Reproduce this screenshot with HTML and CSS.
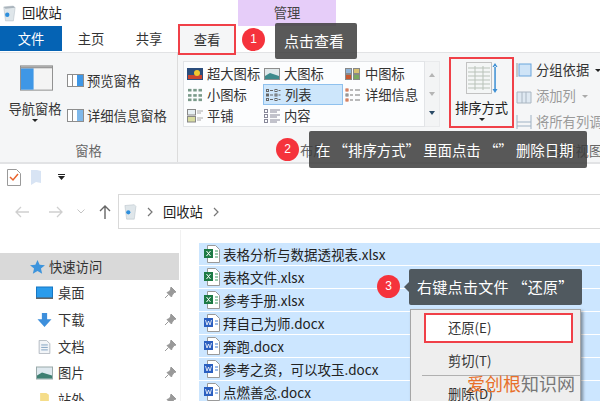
FILE: index.html
```html
<!DOCTYPE html>
<html lang="zh">
<head>
<meta charset="utf-8">
<title>回收站</title>
<link rel="stylesheet" href="styles.css">
</head>
<body>
<div class="win">
  <header class="titlebar">
    <svg class="bin" viewBox="0 0 16 20"><path d="M2 3l11-1 2 2-2 15-9 0z" fill="#dfe6ea" stroke="#b4bec6" stroke-width=".6"/><path d="M2 3l11-1 2 2-11 1z" fill="#aab4bc"/><circle cx="6" cy="12" r="2.5" fill="#2f8fdc"/></svg>
    <span class="wintitle">回收站</span>
    <span class="manage">管理</span>
  </header>
  <nav class="tabs">
    <span class="tab file">文件</span>
    <span class="tab home">主页</span>
    <span class="tab share">共享</span>
    <span class="tab view">查看</span>
  </nav>
  <section class="ribbon">
    <div class="group panes">
      <div class="panes-main">
        <div class="navpane">
          <svg class="bigicon" viewBox="0 0 34 26"><rect x=".5" y=".5" width="33" height="25" fill="#f4f4f4" stroke="#8f8f8f"/><rect x="1" y="3" width="13" height="22" fill="#3f97e6"/><rect x="1" y="1" width="32" height="2" fill="#9a9a9a"/></svg>
          <span class="navlabel">导航窗格</span>
          <i class="caret"></i>
        </div>
        <div class="panelist">
          <div class="paneitem"><svg class="pane-ic" viewBox="0 0 17 13"><rect x=".5" y=".5" width="16" height="12" fill="#fff" stroke="#8d8d8d"/><rect x="10" y="1" width="6" height="11" fill="#3f97e6"/><rect x="5" y="1" width="1" height="11" fill="#8d8d8d"/></svg>预览窗格</div>
          <div class="paneitem"><svg class="pane-ic" viewBox="0 0 17 13"><rect x=".5" y=".5" width="16" height="12" fill="#fff" stroke="#8d8d8d"/><rect x="10" y="1" width="6" height="11" fill="#7fb8ea"/><rect x="5" y="1" width="1" height="11" fill="#8d8d8d"/></svg>详细信息窗格</div>
        </div>
      </div>
      <div class="grouplabel">窗格</div>
    </div>
    <div class="group layout">
      <div class="gallery">
        <div class="gal-grid">
          <div class="gi"><svg class="gi-ic" viewBox="0 0 16 12"><rect width="16" height="12" fill="#2b4d7c"/><rect x="1" y="7" width="14" height="4" fill="#c9452f"/><circle cx="10" cy="5" r="3" fill="#f0c830"/></svg>超大图标</div>
          <div class="gi"><svg class="gi-ic" viewBox="0 0 16 12"><rect x=".5" y=".5" width="15" height="11" fill="#dfe8ea" stroke="#8d8d8d"/><path d="M1 8l5-3 9 3v3H1z" fill="#3d8a8c"/></svg>大图标</div>
          <div class="gi"><svg class="gi-ic" viewBox="0 0 16 12"><rect x=".5" y=".5" width="6" height="5" fill="#8fb4d8" stroke="#888"/><rect x="8.500" y=".5" width="6" height="5" fill="#d8c070" stroke="#888"/><rect x=".5" y="6.500" width="6" height="5" fill="#c9582f" stroke="#888"/><rect x="8.500" y="6.500" width="6" height="5" fill="#7aa860" stroke="#888"/></svg>中图标</div>
          <div class="gi"><svg class="gi-ic" viewBox="0 0 16 16"><g fill="#7a9a8a"><rect x="0" y="1" width="4" height="3"/><rect x="6" y="1" width="4" height="3"/><rect x="12" y="1" width="4" height="3"/><rect x="0" y="7" width="4" height="3"/><rect x="6" y="7" width="4" height="3"/><rect x="12" y="7" width="4" height="3"/><rect x="0" y="12" width="4" height="3"/><rect x="6" y="12" width="4" height="3"/><rect x="12" y="12" width="4" height="3"/></g></svg>小图标</div>
          <div class="gi sel"><svg class="gi-ic" viewBox="0 0 16 14"><g fill="none" stroke="#666"><rect x="1.500" y="1.500" width="2" height="2"/><rect x="1.500" y="6" width="2" height="2"/><rect x="1.500" y="10.500" width="2" height="2"/><rect x="10" y="1.500" width="2" height="2"/><rect x="10" y="6" width="2" height="2"/><rect x="10" y="10.500" width="2" height="2"/><path d="M5 2.500h3M5 7h3M5 11.500h3M13.500 2.500h2M13.500 7h2M13.500 11.500h2"/></g></svg>列表</div>
          <div class="gi"><svg class="gi-ic" viewBox="0 0 16 14"><g fill="none" stroke="#777"><rect x="1" y="1" width="2" height="2" stroke="#c9582f"/><rect x="1" y="6" width="2" height="2"/><rect x="1" y="11" width="2" height="2" stroke="#c9582f"/><path d="M5 2h3M5 7h3M5 12h3M10 2h5M10 7h5M10 12h5"/></g></svg>详细信息</div>
          <div class="gi"><svg class="gi-ic" viewBox="0 0 16 14"><rect x=".5" y=".5" width="8" height="5.500" fill="#e8f0f4" stroke="#888"/><rect x=".5" y="7.500" width="8" height="5.500" fill="#d8dca0" stroke="#888"/><path d="M10 2h6M10 4h4M10 9h6M10 11h4" stroke="#aaa"/></svg>平铺</div>
          <div class="gi"><svg class="gi-ic" viewBox="0 0 16 14"><g fill="none" stroke="#889"><rect x=".5" y=".5" width="3" height="3"/><rect x=".5" y="5.500" width="3" height="3"/><rect x=".5" y="10.500" width="3" height="3"/><path d="M6 1h10M6 3h7M6 6h10M6 8h7M6 11h10M6 13h7"/></g></svg>内容</div>
        </div>
        <div class="gal-scroll">
          <span class="sc sc-up"></span><span class="sc sc-down"></span><span class="sc sc-more"></span>
        </div>
      </div>
      <div class="grouplabel layout-label">布局</div>
    </div>
    <div class="group current">
      <div class="cur-main">
        <div class="sort">
          <svg class="sort-ic" viewBox="0 0 32 32"><rect x=".5" y=".5" width="25" height="31" fill="#f4f6f6" stroke="#c2c2c2"/><path d="M2 6h22M2 10h22M2 14h22M2 18h22M2 22h22M2 26h22M9 4v24M17 4v24" stroke="#b9c2b9"/><path d="M29 1l-2.500 4h5zM29 31l-2.500-4h5z M28.300 4h1.500v24h-1.500z" fill="#3c8fd4"/></svg>
          <span class="sort-label">排序方式</span>
          <i class="caret"></i>
        </div>
        <div class="cur-list">
          <div class="ci"><svg class="ci-ic" viewBox="0 0 16 16"><rect x="3" y="2" width="12" height="12" fill="#cfe4f7" stroke="#6aa5dc"/><path d="M1 1v14" stroke="#999"/></svg><span>分组依据</span><i class="dcaret"></i></div>
          <div class="ci off"><svg class="ci-ic" viewBox="0 0 16 16"><path d="M1 4h14v11H1z" fill="#dfe9f2" stroke="#aab6c2"/><path d="M6 4v11M10 4v11" stroke="#aab6c2"/></svg><span>添加列</span><i class="dcaret off-c"></i></div>
          <div class="ci off"><svg class="ci-ic" viewBox="0 0 16 16"><path d="M1 1v14M15 1v14M1 8h14M1 12h14" stroke="#9fb2c4" fill="none"/></svg><span>将所有列调整为合适的大小</span></div>
        </div>
      </div>
      <div class="grouplabel cur-label">当前视图</div>
    </div>
  </section>
  <div class="qat">
    <svg class="qat-check" viewBox="0 0 14 17"><path d="M.5.500h9l4 4v12H.5z" fill="#fff" stroke="#9a9a9a"/><path d="M3 8l3 3 5-6" fill="none" stroke="#e8632c" stroke-width="1.500"/></svg>
    <svg class="qat-doc" viewBox="0 0 12 15"><path d="M1 0h6l4 1v12l-5-1-5 3z" fill="#d8e4f4"/></svg>
    <svg class="qat-drop" viewBox="0 0 7 6"><path d="M0 0h7v1H0zM0 2h7L3.500 6z" fill="#222"/></svg>
  </div>
  <div class="addr">
    <svg class="ar" viewBox="0 0 14 12"><path d="M14 6H1M6 1L1 6l5 5" fill="none" stroke="#cfcfcf" stroke-width="1.300"/></svg>
    <svg class="ar" viewBox="0 0 14 12"><path d="M0 6h13M8 1l5 5-5 5" fill="none" stroke="#cfcfcf" stroke-width="1.300"/></svg>
    <svg class="chev" viewBox="0 0 8 5"><path d="M.5.500L4 4 7.500.500" fill="none" stroke="#c4c4c4"/></svg>
    <svg class="upar" viewBox="0 0 12 14"><path d="M6 14V1M1 6l5-5 5 5" fill="none" stroke="#666" stroke-width="1.400"/></svg>
    <div class="addrbox">
      <svg class="bin small" viewBox="0 0 16 20"><path d="M2 3l11-1 2 2-2 15-9 0z" fill="#dfe6ea" stroke="#b4bec6" stroke-width=".6"/><circle cx="6" cy="11" r="2.500" fill="#2f8fdc"/></svg>
      <svg class="crumb" viewBox="0 0 6 10"><path d="M1 1l4 4-4 4" fill="none" stroke="#777" stroke-width="1.200"/></svg>
      <span>回收站</span>
      <svg class="crumb" viewBox="0 0 6 10"><path d="M1 1l4 4-4 4" fill="none" stroke="#777" stroke-width="1.200"/></svg>
    </div>
  </div>
  <main class="content">
    <aside class="side">
      <div class="quick"><svg class="star" viewBox="0 0 16 15"><path d="M8 0l2.300 5 5.700.500-4.300 3.700 1.300 5.500L8 11.800 3 14.700l1.300-5.500L0 5.500 5.700 5z" fill="#3d94dc"/></svg>快速访问</div>
      <div class="sitem"><svg class="s-ic" viewBox="0 0 17 13"><rect x=".5" y=".5" width="16" height="11" fill="#2b9cec" stroke="#1577c4"/><rect y="11" width="17" height="1.500" fill="#666"/></svg><span>桌面</span><svg class="pin" viewBox="0 0 12 12"><path d="M7 0l5 5-2 .5-2 3-.5 1.500L3 5.500l1.500-.5 2-2zM4.500 7.500L1 11" fill="#999" stroke="#999"/></svg></div>
      <div class="sitem"><svg class="s-ic" viewBox="0 0 16 16"><path d="M5 0h6v7h5l-8 9-8-9h5z" fill="#3d8fdc"/></svg><span>下载</span><svg class="pin" viewBox="0 0 12 12"><path d="M7 0l5 5-2 .5-2 3-.5 1.500L3 5.500l1.500-.5 2-2zM4.500 7.500L1 11" fill="#999" stroke="#999"/></svg></div>
      <div class="sitem"><svg class="s-ic" viewBox="0 0 14 17"><path d="M.5.500h9l4 4v12H.5z" fill="#f2f5f8" stroke="#a8b0b8"/><path d="M3 6h8M3 9h8M3 12h8" stroke="#6c94b8"/></svg><span>文档</span><svg class="pin" viewBox="0 0 12 12"><path d="M7 0l5 5-2 .5-2 3-.5 1.500L3 5.500l1.500-.5 2-2zM4.500 7.500L1 11" fill="#999" stroke="#999"/></svg></div>
      <div class="sitem"><svg class="s-ic" viewBox="0 0 17 13"><rect x=".5" y=".5" width="16" height="12" fill="#dfe9ef" stroke="#9aa"/><path d="M1 9l5-3 10 3v3H1z" fill="#3e7f72"/></svg><span>图片</span><svg class="pin" viewBox="0 0 12 12"><path d="M7 0l5 5-2 .5-2 3-.5 1.500L3 5.500l1.500-.5 2-2zM4.500 7.500L1 11" fill="#999" stroke="#999"/></svg></div>
      <div class="sitem"><svg class="s-ic" viewBox="0 0 12 16"><path d="M1 0h7l3 2v14H1z" fill="#f5dd8a"/></svg><span>站外</span><svg class="pin" viewBox="0 0 12 12"><path d="M7 0l5 5-2 .5-2 3-.5 1.500L3 5.500l1.500-.5 2-2zM4.500 7.500L1 11" fill="#999" stroke="#999"/></svg></div>
    </aside>
    <section class="files">
      <div class="row"><svg class="f-ic" viewBox="0 0 16 18"><path d="M3.500.500h8l4 4v13h-12z" fill="#fff" stroke="#9a9a9a"/><rect y="4" width="9" height="9" fill="#1d7a45"/><path d="M2.500 6l4 5M6.500 6l-4 5" stroke="#fff"/><path d="M11 6h3M11 9h3M11 12h3" stroke="#3f9a63"/></svg>表格分析与数据透视表.xlsx</div>
      <div class="row"><svg class="f-ic" viewBox="0 0 16 18"><path d="M3.500.500h8l4 4v13h-12z" fill="#fff" stroke="#9a9a9a"/><rect y="4" width="9" height="9" fill="#1d7a45"/><path d="M2.500 6l4 5M6.500 6l-4 5" stroke="#fff"/><path d="M11 6h3M11 9h3M11 12h3" stroke="#3f9a63"/></svg>表格文件.xlsx</div>
      <div class="row"><svg class="f-ic" viewBox="0 0 16 18"><path d="M3.500.500h8l4 4v13h-12z" fill="#fff" stroke="#9a9a9a"/><rect y="4" width="9" height="9" fill="#1d7a45"/><path d="M2.500 6l4 5M6.500 6l-4 5" stroke="#fff"/><path d="M11 6h3M11 9h3M11 12h3" stroke="#3f9a63"/></svg>参考手册.xlsx</div>
      <div class="row"><svg class="f-ic" viewBox="0 0 16 18"><path d="M3.500.500h8l4 4v13h-12z" fill="#fff" stroke="#9a9a9a"/><rect y="4" width="9" height="9" fill="#2b5fc0"/><path d="M1.500 6l1.500 5 1.500-4 1.500 4 1.500-5" fill="none" stroke="#fff" stroke-width=".8"/><path d="M11 7h3M11 10h3" stroke="#3f7ad0"/></svg>拜自己为师.docx</div>
      <div class="row"><svg class="f-ic" viewBox="0 0 16 18"><path d="M3.500.500h8l4 4v13h-12z" fill="#fff" stroke="#9a9a9a"/><rect y="4" width="9" height="9" fill="#2b5fc0"/><path d="M1.500 6l1.500 5 1.500-4 1.500 4 1.500-5" fill="none" stroke="#fff" stroke-width=".8"/><path d="M11 7h3M11 10h3" stroke="#3f7ad0"/></svg>奔跑.docx</div>
      <div class="row"><svg class="f-ic" viewBox="0 0 16 18"><path d="M3.500.500h8l4 4v13h-12z" fill="#fff" stroke="#9a9a9a"/><rect y="4" width="9" height="9" fill="#2b5fc0"/><path d="M1.500 6l1.500 5 1.500-4 1.500 4 1.500-5" fill="none" stroke="#fff" stroke-width=".8"/><path d="M11 7h3M11 10h3" stroke="#3f7ad0"/></svg>参考之资，可以攻玉.docx</div>
      <div class="row"><svg class="f-ic" viewBox="0 0 16 18"><path d="M3.500.500h8l4 4v13h-12z" fill="#fff" stroke="#9a9a9a"/><rect y="4" width="9" height="9" fill="#2b5fc0"/><path d="M1.500 6l1.500 5 1.500-4 1.500 4 1.500-5" fill="none" stroke="#fff" stroke-width=".8"/><path d="M11 7h3M11 10h3" stroke="#3f7ad0"/></svg>点燃善念.docx</div>
    </section>
  </main>
</div>

<span class="badge b1">1</span>
<div class="tip t1">点击查看</div>
<span class="badge b2">2</span>
<div class="tip t2">在 “排序方式” 里面点击 “” 删除日期</div>
<span class="badge b3">3</span>
<div class="tip t3">右键点击文件 “还原”</div>
<div class="menu">
  <div class="mi restore">还原(E)</div>
  <div class="mi cut">剪切(T)</div>
  <div class="msep"></div>
  <div class="mi">删除(D)</div>
</div>
<div class="mark"><b>爱创根</b>知识网</div>
</body>
</html>
```
FILE: styles.css
```css
* { box-sizing: border-box; }
html, body { margin: 0; height: 100%; overflow: hidden; }
body {
  position: relative;
  width: 600px;
  height: 401px;
  background: #fff;
  color: #333;
  font: 13.3px/1.2 "Noto Sans CJK SC", "Liberation Sans", sans-serif;
}
svg { display: block; flex: none; }
.win { display: flex; flex-direction: column; height: 401px; overflow: hidden; }

.titlebar { display: flex; align-items: center; height: 26px; padding-left: 2px; flex: none; position: relative; }
.bin { width: 14px; height: 18px; }
.wintitle { margin-left: 6px; color: #222; }
.manage {
  position: absolute; left: 238px; top: 0; width: 98px; height: 26px;
  background: #e6cdf9; text-align: center; line-height: 25px; color: #444;
}

.tabs { display: flex; height: 27px; flex: none; border-bottom: 1px solid #e2e3e5; }
.tab { display: flex; align-items: center; justify-content: center; color: #333; }
.file { width: 62px; height: 25px; background: #0563b4; color: #fff; }
.home { width: 58px; }
.share { width: 58px; }
.view { width: 58px; height: 31px; margin-top: -2px; border: 2px solid #f04048; background: #f5f6f7; position: relative; }

.ribbon { display: flex; height: 111px; flex: none; background: #f5f6f7; border-bottom: 2px solid #e2e3e5; }
.group { display: flex; flex-direction: column; position: relative; flex: none; }
.grouplabel { text-align: center; color: #666; line-height: 16px; }
.panes { width: 178px; border-right: 1px solid #dcdcdc; }
.panes-main { display: flex; height: 90px; padding: 12px 0 0 8px; }
.navpane { display: flex; flex-direction: column; align-items: center; width: 54px; }
.bigicon { width: 33px; height: 26px; margin-left: 2px; }
.navlabel { margin-top: 10px; white-space: nowrap; }
.caret { width: 0; height: 0; margin-top: 2px; border: 3px solid transparent; border-top: 3px solid #222; border-bottom: 0; }
.panelist { display: flex; flex-direction: column; gap: 18px; margin: 7px 0 0 5px; }
.paneitem { display: flex; align-items: center; gap: 3px; height: 17px; white-space: nowrap; }
.pane-ic { width: 17px; height: 13px; }

.layout { width: 271px; padding: 8px 0 0 5px; }
.gallery { display: flex; width: 257px; height: 66px; }
.gal-grid {
  display: grid; width: 243px; height: 66px; padding: 1px 0 0 2px;
  grid-template-columns: 77px 81px 78px; grid-template-rows: 21px 21px 21px;
  background: #fcfdfe; border: 1px solid #e2e4e7;
}
.gi { display: flex; align-items: center; gap: 4px; white-space: nowrap; padding-left: 1px; }
.gi-ic { width: 16px; height: 14px; }
.sel { background: #cde6fb; border: 1px solid #8fc1ee; margin-right: 1px; }
.gal-scroll { display: flex; flex-direction: column; width: 15px; border: 1px solid #e9eaec; border-left: 0; background: #f3f4f5; align-items: center; justify-content: space-around; padding: 4px 0; }
.sc { width: 0; height: 0; border: 3px solid transparent; }
.sc-up { border-bottom: 4px solid #b5b5b5; border-top: 0; }
.sc-down { border-top: 4px solid #b5b5b5; border-bottom: 0; }
.sc-more { border-top: 4px solid #2a4a66; border-bottom: 0; }

.layout-label { position: absolute; left: 122px; top: 90px; }
.current { flex: 1; padding: 4px 0 0 0; }
.cur-main { display: flex; }
.sort {
  display: flex; flex-direction: column; align-items: center; flex: none; width: 65px; height: 71px;
  border: 2px solid #f04048; padding-top: 3px;
}
.sort-ic { width: 32px; height: 32px; }
.sort-label { margin-top: 6px; color: #222; white-space: nowrap; }
.cur-list { display: flex; flex-direction: column; gap: 8px; margin: 4px 0 0 2px; white-space: nowrap; }
.ci { display: flex; align-items: center; gap: 4px; height: 18px; }
.ci-ic { width: 16px; height: 16px; }
.off { color: #9a9a9a; }
.dcaret { width: 0; height: 0; margin-left: 2px; border: 3px solid transparent; border-top: 3px solid #222; border-bottom: 0; }
.off-c { border-top-color: #aaa; }
.cur-label { position: absolute; left: 100px; top: 90px; white-space: nowrap; }

.qat { display: flex; align-items: center; height: 26px; flex: none; padding-left: 7px; }
.qat-check { width: 14px; height: 17px; }
.qat-doc { width: 12px; height: 15px; margin-left: 9px; }
.qat-drop { width: 7px; height: 6px; margin-left: 16px; }

.addr { display: flex; align-items: center; height: 36px; flex: none; margin-top: 4px; padding: 0 0 1px 15px; }
.ar { width: 14px; height: 12px; margin-right: 20px; }
.chev { width: 8px; height: 5px; margin: 0 14px 0 -6px; }
.upar { width: 12px; height: 14px; margin-right: 7px; }
.addrbox {
  display: flex; align-items: center; gap: 10px; height: 35px; width: 600px;
  border: 1px solid #d9d9d9; padding-left: 4px; color: #222; flex: none;
}
.bin.small { width: 14px; height: 17px; }
.crumb { width: 6px; height: 10px; }

.content { display: flex; flex: 1; min-height: 0; }
.side { width: 181px; padding-top: 23px; flex: none; border-right: 1px solid #f1f1f1; }
.quick { display: flex; align-items: center; gap: 4px; height: 27px; padding-left: 30px; background: #d9d9d9; width: 179px; }
.star { width: 15px; height: 14px; }
.sitem { display: flex; align-items: center; height: 26.7px; padding-left: 36px; position: relative; }
.s-ic { width: 17px; height: 14px; margin-right: 5px; }
.pin { width: 12px; height: 12px; position: absolute; left: 164px; top: 7px; }

.files { flex: 1; padding: 13px 0 0 18px; overflow: hidden; }
.row { display: flex; align-items: center; gap: 3px; height: 22px; margin-bottom: 1px; background: #cce6ff; padding-left: 5px; font-size: 13.5px; color: #222; white-space: nowrap; }
.f-ic { width: 16px; height: 18px; }

.badge {
  position: absolute; width: 23px; height: 23px; border-radius: 50%; background: #f5333c;
  color: #fff; font-size: 12px; line-height: 23px; text-align: center; font-family: "Liberation Sans", sans-serif;
}
.b1 { left: 242px; top: 28px; }
.b2 { left: 276px; top: 138px; }
.b3 { left: 377px; top: 275px; }
.tip { position: absolute; background: rgba(60,60,60,.85); color: #fff; border-radius: 2px; font-size: 15px; display: flex; align-items: center; white-space: nowrap; }
.t1 { left: 275px; top: 23px; width: 82px; height: 36px; padding-left: 9px; }
.t2 { left: 309px; top: 131px; width: 278px; height: 37px; padding-left: 7px; font-size: 14.4px; }
.t3 { left: 409px; top: 269px; width: 173px; height: 36px; padding-left: 8px; background: #50595f; letter-spacing: .3px; }
.t3::before { content: ""; position: absolute; left: -5px; top: 13px; border: 5px solid transparent; border-right-color: #50595f; border-left: 0; }

.menu { position: absolute; left: 410px; top: 309px; width: 171px; height: 92px; background: #eeeeee; border: 1px solid #a6a6a6; border-bottom: 0; padding-top: 3px; box-shadow: 2px 2px 3px rgba(0,0,0,.4); }
.mi { height: 29px; padding-left: 37px; line-height: 29px; color: #333; }
.restore { width: 149px; margin-left: 13px; padding-left: 22px; height: 30px; background: #fff; border: 2px solid #f04048; line-height: 26px; }
.cut { margin-top: 3px; height: 29px; line-height: 30px; }
.msep { height: 1px; margin: 0 0 3px 11px; background: #b0b0b0; }
.mark { position: absolute; left: 467px; top: 370px; font-size: 18px; line-height: 26px; color: #777; white-space: nowrap; }
.mark b { font-weight: 400; color: #e8702a; }
```
